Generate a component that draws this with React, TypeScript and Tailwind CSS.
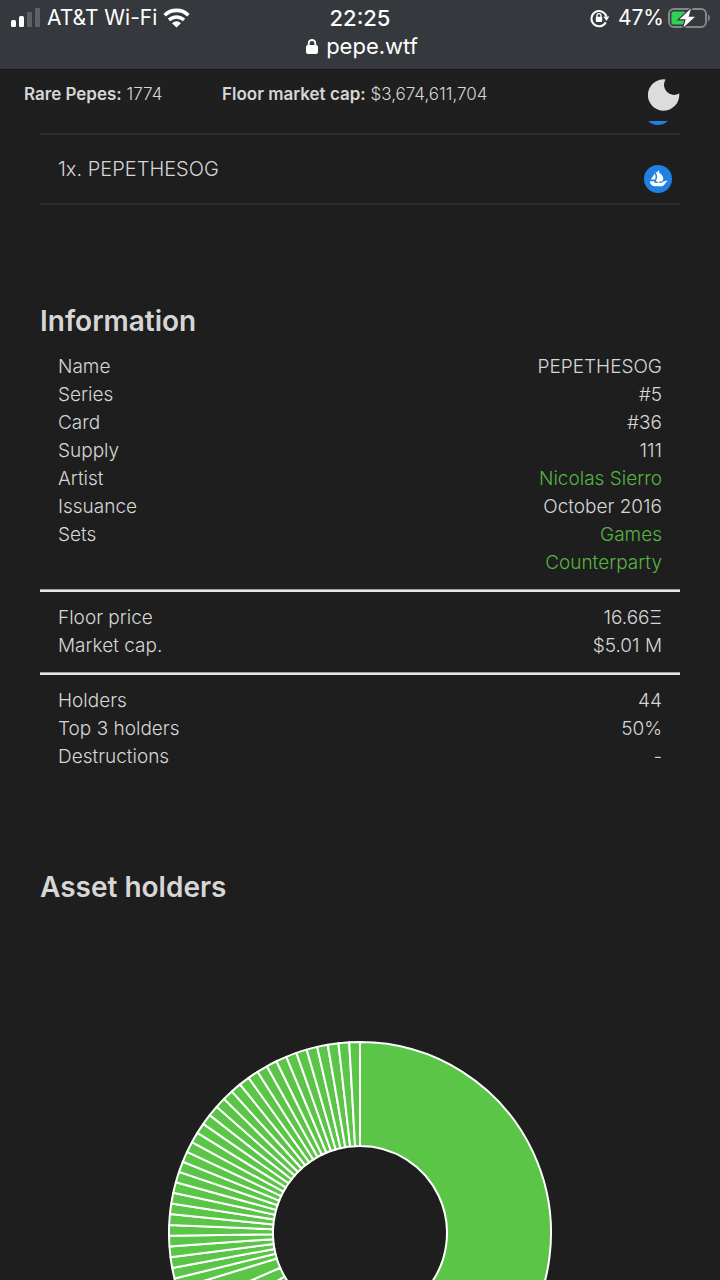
import type { ReactNode } from "react";

type Row = { label: string; value: ReactNode };

// cards per holder, largest first
const holders = [40, 9, 7, 4, 4, 3, 3, 2, 2, 2, 2, ...Array<number>(33).fill(1)];

const groups: Row[][] = [
  [
    { label: "Name", value: "PEPETHESOG" },
    { label: "Series", value: "#5" },
    { label: "Card", value: "#36" },
    { label: "Supply", value: "111" },
    { label: "Artist", value: <GreenLink href="#artist">Nicolas Sierro</GreenLink> },
    { label: "Issuance", value: "October 2016" },
    { label: "Sets", value: <GreenLink href="#games">Games</GreenLink> },
    { label: "", value: <GreenLink href="#counterparty">Counterparty</GreenLink> },
  ],
  [
    { label: "Floor price", value: "16.66Ξ" },
    { label: "Market cap.", value: "$5.01 M" },
  ],
  [
    { label: "Holders", value: "44" },
    { label: "Top 3 holders", value: "50%" },
    { label: "Destructions", value: "-" },
  ],
];

function GreenLink({ href, children }: { href: string; children: ReactNode }) {
  return (
    <a href={href} className="text-[#54b542] hover:underline">
      {children}
    </a>
  );
}

function StatusBar() {
  return (
    <div className="shrink-0 bg-[#35383c] px-2.5 pt-1 pb-[9px] text-white">
      <div className="grid h-7 grid-cols-[1fr_auto_1fr] items-center">
        <div className="flex items-center gap-1.5">
          <svg width="31" height="20" viewBox="-1 0 31 20" aria-hidden="true">
            <rect x="0" y="12" width="5" height="7" rx="1.5" fill="#fff" />
            <rect x="8" y="8" width="5" height="11" rx="1.5" fill="#fff" />
            <rect x="16" y="4" width="5" height="15" rx="1" fill="#5f6265" />
            <rect x="24" y="0" width="5" height="19" rx="1" fill="#5f6265" />
          </svg>
          <span className="text-[21px] leading-7">AT&amp;T Wi-Fi</span>
          <svg width="27" height="20" viewBox="0 0 27 20" aria-hidden="true">
            <path d="M1.6 7.2a17 17 0 0 1 23.8 0" fill="none" stroke="#fff" strokeWidth="3.6" />
            <path d="M6 12a10.8 10.8 0 0 1 15 0" fill="none" stroke="#fff" strokeWidth="3.4" />
            <path d="M13.5 19.5 9 15.2a6.4 6.4 0 0 1 9 0z" fill="#fff" />
          </svg>
        </div>
        <span className="text-[22px] leading-7 font-medium">22:25</span>
        <div className="flex items-center justify-end gap-2">
          <svg width="20" height="20" viewBox="0 0 20 20" aria-hidden="true">
            <path d="M15.8 14.2A7.6 7.6 0 1 1 16.4 8.6" fill="none" stroke="#fff" strokeWidth="2" />
            <path d="M13.4 8.6h6L16.4 13z" fill="#fff" />
            <rect x="5.8" y="8.8" width="6.4" height="5.2" rx="0.8" fill="#fff" />
            <path d="M7 9V7.6a2 2 0 0 1 4 0V9" fill="none" stroke="#fff" strokeWidth="1.3" />
          </svg>
          <div className="flex items-center gap-1">
            <span className="text-[21px] leading-7">47%</span>
            <svg width="42" height="22" viewBox="0 0 42 22" aria-hidden="true">
              <rect x="1" y="2" width="37" height="18" rx="5" fill="none" stroke="#85888b" strokeWidth="2" />
              <path d="M40 7.6c2.4 1 2.4 5.8 0 6.8z" fill="#85888b" />
              <rect x="3.4" y="4.5" width="14.6" height="13" rx="2.6" fill="#30d158" />
              <path
                d="M23 1.5 11.5 12.3h6.2L15.4 20.5 27 9.7h-6.4z"
                fill="#fff"
                stroke="#35383c"
                strokeWidth="2.4"
                paintOrder="stroke"
              />
            </svg>
          </div>
        </div>
      </div>
      <div className="flex h-7 items-center justify-center gap-2 pl-1">
        <svg width="12" height="15" viewBox="0 0 12 15" aria-hidden="true">
          <rect y="6" width="12" height="9" rx="2" fill="#fff" />
          <path d="M2.7 7V4.3a3.3 3.3 0 0 1 6.6 0V7" fill="none" stroke="#fff" strokeWidth="1.8" />
        </svg>
        <span className="text-[22px] leading-7">pepe.wtf</span>
      </div>
    </div>
  );
}

function TopBar() {
  return (
    <header className="flex h-[52px] shrink-0 items-center border-t border-[#16181a] px-6 pb-0.5 text-[17px] font-light">
      <p className="w-[198px]">
        <b className="font-semibold">Rare Pepes:</b> 1774
      </p>
      <p className="flex-1">
        <b className="font-semibold">Floor market cap:</b> $3,674,611,704
      </p>
      <button type="button" aria-label="Toggle dark mode" className="mr-4">
        <svg width="32" height="32" viewBox="0 0 32 32">
          <path d="M17.6 .4A10 10 0 0 0 31.2 14.4 15.7 15.7 0 1 1 17.6 .4z" fill="#dcdcdc" />
        </svg>
      </button>
    </header>
  );
}

function OpenSeaLink() {
  return (
    <a href="#opensea" aria-label="View on OpenSea">
      <svg width="28" height="28" viewBox="0 0 90 90">
        <circle cx="45" cy="45" r="45" fill="#2081e2" />
        <path
          d="M22 47 34.5 27.5C38 35 39 41 35 47zM37 22l7 2v-3.5a2.5 2.5 0 0 1 5 0V25c8 5 13 12 13 19 0 3-2 6-5 8.7h-8v5h6.5l4-4.2L74.4 49.5v3.6C67 57 66 68 57.4 68H34c-8 0-15-6.5-15-15.8h13.5c0 3.5 2 5.5 5 5.5H44v-5h-7C44 43 44 35 37 22z"
          fill="#fff"
        />
      </svg>
    </a>
  );
}

function InfoTable() {
  return (
    <table className="w-full text-[19px] leading-7 font-light">
      {groups.map((rows, i) => (
        <tbody key={i}>
          {i > 0 && (
            <tr>
              <td colSpan={2}>
                <hr className="my-3 h-[3px] border-t border-[#9d9d9d] bg-[#e6e6e6]" />
              </td>
            </tr>
          )}
          {rows.map((row, j) => (
            <tr key={j}>
              <th scope="row" className="pl-[18px] text-left font-light">
                {row.label}
              </th>
              <td className="pr-[18px] text-right">{row.value}</td>
            </tr>
          ))}
        </tbody>
      ))}
    </table>
  );
}

function HoldersChart() {
  const total = holders.reduce((sum, n) => sum + n, 0);
  const center = 193;
  const outer = 191;
  const inner = 87;
  const point = (r: number, share: number) => {
    const angle = (share / total) * 2 * Math.PI;
    return `${center + r * Math.sin(angle)} ${center - r * Math.cos(angle)}`;
  };

  let start = 0;
  const slices = holders.map((n) => {
    const from = start;
    const to = (start += n);
    return `M${point(outer, from)}A${outer} ${outer} 0 0 1 ${point(outer, to)}L${point(inner, to)}A${inner} ${inner} 0 0 0 ${point(inner, from)}z`;
  });

  return (
    <svg width="386" height="386" viewBox="0 0 386 386" role="img" aria-label="Asset holders" className="shrink-0">
      {slices.map((d, i) => (
        <path key={i} d={d} fill="#5bc547" stroke="#fff" strokeWidth="2" strokeLinejoin="round" />
      ))}
    </svg>
  );
}

export default function App() {
  return (
    <div className="flex h-screen flex-col overflow-hidden bg-[#1f1f1f] font-['Inter',sans-serif] text-[#d6d6d6]">
      <StatusBar />
      <TopBar />
      <main className="flex min-h-0 flex-1 flex-col overflow-hidden px-6">
        <section className="shrink-0 bg-[#1e1e1e] px-4 pb-7">
          {/* previous row, mostly scrolled under the top bar */}
          <div className="flex h-3 items-end justify-end overflow-hidden pr-2 pb-2">
            <OpenSeaLink />
          </div>
          <div className="flex h-[72px] justify-between border-y-2 border-[#2d2d2d] pr-2 pl-[18px]">
            <span className="pt-5 text-xl font-light">1x. PEPETHESOG</span>
            <span className="pt-[30px]">
              <OpenSeaLink />
            </span>
          </div>
        </section>

        <section className="mt-5 shrink-0 bg-[#1e1e1e] px-4 pt-12 pb-8">
          <h2 className="mb-3 text-[28px] leading-10 font-semibold">Information</h2>
          <InfoTable />
        </section>

        <section className="mt-4 shrink-0 bg-[#1e1e1e] px-4 pt-12">
          <h2 className="text-[28px] leading-10 font-semibold">Asset holders</h2>
          <div className="flex justify-center pt-[133px]">
            <HoldersChart />
          </div>
        </section>
      </main>
    </div>
  );
}
